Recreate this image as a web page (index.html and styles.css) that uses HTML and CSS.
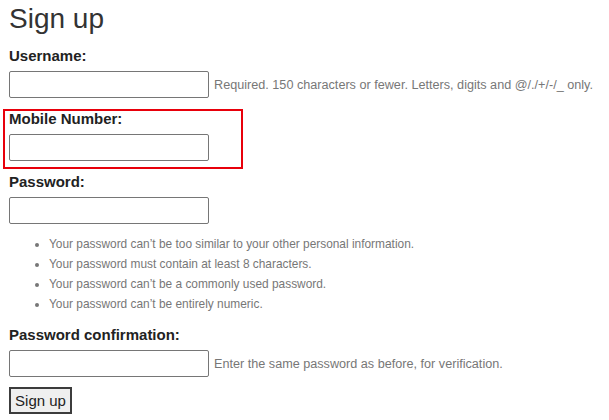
FILE: index.html
```html
<!DOCTYPE html>
<html lang="en">
<head>
<meta charset="utf-8">
<title>Sign up</title>
<link rel="stylesheet" href="styles.css">
</head>
<body>
<main class="page">
  <h1 class="title">Sign up</h1>
  <form class="form">
    <div class="field">
      <label class="label" for="u">Username:</label>
      <div class="row">
        <input class="input" id="u" type="text">
        <span class="help">Required. 150 characters or fewer. Letters, digits and @/./+/-/_ only.</span>
      </div>
    </div>
    <div class="field field-marked">
      <label class="label" for="m">Mobile Number:</label>
      <div class="row">
        <input class="input" id="m" type="text">
      </div>
    </div>
    <div class="field">
      <label class="label" for="p1">Password:</label>
      <div class="row">
        <input class="input" id="p1" type="password">
      </div>
      <ul class="rules">
        <li>Your password can’t be too similar to your other personal information.</li>
        <li>Your password must contain at least 8 characters.</li>
        <li>Your password can’t be a commonly used password.</li>
        <li>Your password can’t be entirely numeric.</li>
      </ul>
    </div>
    <div class="field field-last">
      <label class="label" for="p2">Password confirmation:</label>
      <div class="row">
        <input class="input" id="p2" type="password">
        <span class="help">Enter the same password as before, for verification.</span>
      </div>
    </div>
    <button class="btn" type="button">Sign up</button>
  </form>
</main>
</body>
</html>
```
FILE: styles.css
```css
html, body {
  margin: 0;
  padding: 0;
  background: #fff;
}
body {
  font-family: "Liberation Sans", Arial, sans-serif;
  color: #333;
}
.page {
  padding: 3px 9px;
}
.title {
  margin: 0;
  font-size: 28px;
  line-height: 32px;
  font-weight: normal;
  color: #333;
}
.form {
  margin-top: 12px;
}
.field {
  margin-bottom: 12px;
}
.field-marked {
  position: relative;
}
.field-marked::after {
  content: "";
  position: absolute;
  left: -6px;
  top: -1px;
  width: 236px;
  height: 56px;
  border: 2px solid #e8000b;
  pointer-events: none;
}
.field-last {
  margin-bottom: 10px;
}
.label {
  display: block;
  font-size: 15px;
  line-height: 18px;
  font-weight: bold;
  color: #222;
  margin-bottom: 6px;
}
.row {
  display: flex;
  align-items: center;
  gap: 5px;
}
.input {
  box-sizing: border-box;
  flex-shrink: 0;
  width: 200px;
  height: 27px;
  margin: 0;
  padding: 2px 4px;
  border: 1px solid #767676;
  border-radius: 2px;
  background: #fff;
  font-family: inherit;
  font-size: 13px;
}
.help {
  font-size: 12.65px;
  color: #777;
  white-space: nowrap;
}
.rules {
  margin: 10px 0 0;
  padding-left: 40px;
  font-size: 11.9px;
  line-height: 20px;
  color: #777;
}
.btn {
  box-sizing: border-box;
  height: 27px;
  width: 63px;
  padding: 0;
  font-family: inherit;
  font-size: 15px;
  color: #222;
  background: #efefef;
  border: 2px solid #3c3c3c;
  border-radius: 0;
}
```
